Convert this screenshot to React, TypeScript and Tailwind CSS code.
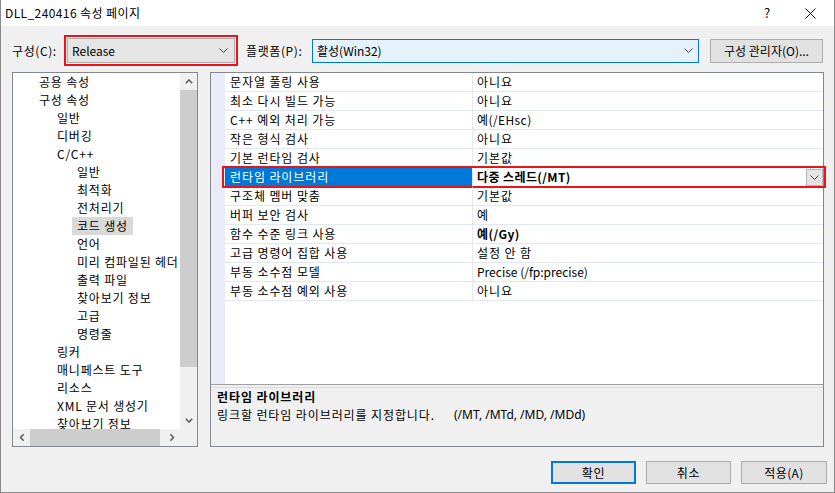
import React from 'react';

type Prop = { name: string; value: string; bold?: boolean; selected?: boolean };

const props: Prop[] = [
  { name: '문자열 풀링 사용', value: '아니요' },
  { name: '최소 다시 빌드 가능', value: '아니요' },
  { name: 'C++ 예외 처리 가능', value: '예(/EHsc)' },
  { name: '작은 형식 검사', value: '아니요' },
  { name: '기본 런타임 검사', value: '기본값' },
  { name: '런타임 라이브러리', value: '다중 스레드(/MT)', bold: true, selected: true },
  { name: '구조체 멤버 맞춤', value: '기본값' },
  { name: '버퍼 보안 검사', value: '예' },
  { name: '함수 수준 링크 사용', value: '예(/Gy)', bold: true },
  { name: '고급 명령어 집합 사용', value: '설정 안 함' },
  { name: '부동 소수점 모델', value: 'Precise (/fp:precise)' },
  { name: '부동 소수점 예외 사용', value: '아니요' },
];

const tree: { label: string; level: 0 | 1 | 2; selected?: boolean }[] = [
  { label: '공용 속성', level: 0 },
  { label: '구성 속성', level: 0 },
  { label: '일반', level: 1 },
  { label: '디버깅', level: 1 },
  { label: 'C/C++', level: 1 },
  { label: '일반', level: 2 },
  { label: '최적화', level: 2 },
  { label: '전처리기', level: 2 },
  { label: '코드 생성', level: 2, selected: true },
  { label: '언어', level: 2 },
  { label: '미리 컴파일된 헤더', level: 2 },
  { label: '출력 파일', level: 2 },
  { label: '찾아보기 정보', level: 2 },
  { label: '고급', level: 2 },
  { label: '명령줄', level: 2 },
  { label: '링커', level: 1 },
  { label: '매니페스트 도구', level: 1 },
  { label: '리소스', level: 1 },
  { label: 'XML 문서 생성기', level: 1 },
  { label: '찾아보기 정보', level: 1 },
];

const indent = ['ml-[21px]', 'ml-[39px]', 'ml-[59px]'];

// hangul-only values get the wider Malgun-like spacing, latin ones don't
const valueTracking = (v: string) =>
  /^[가-힣 ]+$/.test(v) ? 'tracking-[0.9px]' : /[가-힣]/.test(v) ? 'tracking-[0.4px]' : '';

// small combo-box chevron
function ComboChevron() {
  return (
    <svg width="9" height="5" viewBox="0 0 9 5" className="shrink-0">
      <polyline points="0.5,0.5 4.5,4.5 8.5,0.5" fill="none" stroke="#444" strokeWidth="1" />
    </svg>
  );
}

// scrollbar arrow, drawn pointing up and rotated
function ScrollArrow({ rotate }: { rotate: string }) {
  return (
    <svg width="8" height="5" viewBox="0 0 8 5" className={rotate}>
      <polyline points="0.8,4.2 4,1 7.2,4.2" fill="none" stroke="#606060" strokeWidth="1.6" />
    </svg>
  );
}

function Button({ children, primary, className = '' }: { children: React.ReactNode; primary?: boolean; className?: string }) {
  return (
    <div
      className={`flex items-center justify-center bg-[#e1e1e1] h-[23px] ${
        primary ? 'border-2 border-[#0078d7]' : 'border border-[#adadad]'
      } ${className}`}
    >
      {children}
    </div>
  );
}

export default function App() {
  return (
    <div className="w-[835px] h-[493px] bg-[#f0f0f0] border-x border-b border-[#8a8a8a] flex flex-col text-[12px] text-black font-['Noto_Sans_CJK_KR','Noto_Sans',sans-serif] leading-[18px] overflow-hidden">
      {/* Title bar */}
      <div className="h-[26px] bg-white flex items-center pl-[4px] shrink-0">
        <span className="flex-1 tracking-[0.4px]">DLL_240416 속성 페이지</span>
        <span className="w-[12px] text-center mr-[32px] text-[13px]">?</span>
        <svg width="11" height="11" viewBox="0 0 11 11" className="mr-[18px]">
          <path d="M0.5 0.5 L10.5 10.5 M10.5 0.5 L0.5 10.5" stroke="#111" strokeWidth="1" />
        </svg>
      </div>

      {/* Configuration row */}
      <div className="flex items-center h-[31px] mt-[9px] mb-[6px] pl-[11px] shrink-0">
        <span className="w-[52px] tracking-[0.6px]">구성(C):</span>
        <div className="w-[174px] h-[31px] border-2 border-[#e8141c] p-[1px]">
          <div className="h-full bg-[#e5e5e5] border border-[#adadad] flex items-center pl-[4px] pr-[6px]">
            <span className="flex-1">Release</span>
            <ComboChevron />
          </div>
        </div>
        <span className="ml-[8px] w-[66px] tracking-[0.6px]">플랫폼(P):</span>
        <div className="w-[387px] h-[24px] bg-[#e5f1fb] border border-[#0078d7] flex items-center pl-[4px] pr-[5px]">
          <span className="flex-1">활성(Win32)</span>
          <ComboChevron />
        </div>
        <Button className="ml-[11px] w-[113px] h-[24px]">구성 관리자(O)...</Button>
      </div>

      {/* Main area */}
      <div className="flex h-[375px] pl-[11px] gap-[12px] shrink-0">
        {/* Tree */}
        <div className="w-[186px] h-full border border-[#828790] grid grid-cols-[1fr_17px] grid-rows-[1fr_17px] bg-white">
          <div className="overflow-hidden">
            {tree.map((t, i) => (
              <div key={i} className="h-[18px] flex items-center whitespace-nowrap tracking-[0.8px]">
                <span className={`${indent[t.level]} px-[5px] h-[18px] ${t.selected ? 'bg-[#d9d9d9]' : ''}`}>{t.label}</span>
              </div>
            ))}
          </div>
          <div className="bg-[#f0f0f0] flex flex-col">
            <div className="h-[17px] flex items-center justify-center">
              <ScrollArrow rotate="" />
            </div>
            <div className="h-[277px] bg-[#cdcdcd]" />
            <div className="flex-1" />
            <div className="h-[17px] flex items-center justify-center">
              <ScrollArrow rotate="rotate-180" />
            </div>
          </div>
          <div className="bg-[#f0f0f0] flex">
            <div className="w-[17px] flex items-center justify-center">
              <ScrollArrow rotate="-rotate-90" />
            </div>
            <div className="w-[130px] bg-[#cdcdcd]" />
            <div className="flex-1" />
            <div className="w-[17px] flex items-center justify-center">
              <ScrollArrow rotate="rotate-90" />
            </div>
          </div>
          <div className="bg-[#f0f0f0]" />
        </div>

        {/* Property grid + description */}
        <div className="w-[614px] h-full border border-[#828790] flex flex-col">
          <div className="h-[311px] bg-white flex">
            <div className="w-[14px] bg-[#e9ecf8] shrink-0" />
            <div className="flex-1">
              {props.map((p, i) => (
                <div key={i} className="relative h-[19px] flex border-b border-[#e3e7f4]">
                  <div
                    className={`w-[248px] pl-[5px] border-r border-[#e3e7f4] whitespace-nowrap tracking-[0.9px] ${
                      p.selected ? 'bg-[#0078d7] text-white' : ''
                    }`}
                  >
                    {p.name}
                  </div>
                  <div className={`flex-1 flex items-center pl-[4px] whitespace-nowrap ${p.bold ? 'font-bold' : ''}`}>
                    <span className={`flex-1 ${valueTracking(p.value)}`}>{p.value}</span>
                    {p.selected && (
                      <div className="w-[17px] h-[17px] bg-[#e5e5e5] border border-[#b9b9b9] flex items-center justify-center">
                        <ComboChevron />
                      </div>
                    )}
                  </div>
                  {p.selected && (
                    <div className="absolute -left-[3px] -right-[3px] -top-[2px] -bottom-[2px] border-2 border-[#e8141c] pointer-events-none" />
                  )}
                </div>
              ))}
            </div>
          </div>
          <div className="h-[4px] border-t border-[#a0a0a0] border-b border-b-[#dcdcdc] shrink-0" />
          <div className="flex-1 pl-[6px]">
            <div className="font-bold tracking-[0.9px]">런타임 라이브러리</div>
            <div className="flex whitespace-nowrap">
              <span className="tracking-[0.9px]">링크할 런타임 라이브러리를 지정합니다.</span>
              <span className="ml-[19px] font-['Noto_Sans',sans-serif]">(/MT, /MTd, /MD, /MDd)</span>
            </div>
          </div>
        </div>
      </div>

      {/* Buttons */}
      <div className="flex justify-end gap-[10px] mt-[14px] pr-[7px]">
        <Button primary className="w-[85px] tracking-[0.6px]">확인</Button>
        <Button className="w-[85px] tracking-[0.6px]">취소</Button>
        <Button className="w-[86px] tracking-[0.4px]">적용(A)</Button>
      </div>
    </div>
  );
}
